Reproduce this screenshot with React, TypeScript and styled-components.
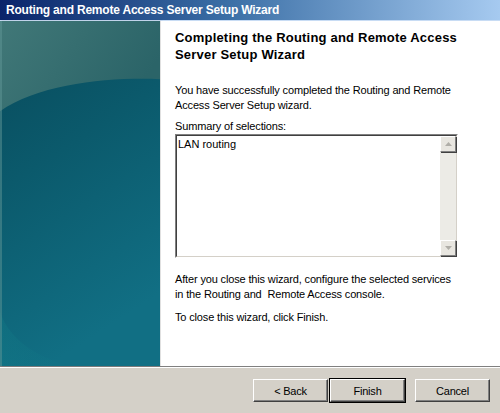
import styled, { createGlobalStyle } from "styled-components";

const GlobalStyle = createGlobalStyle`
  html, body {
    margin: 0;
    padding: 0;
    background: #d4d0c8;
  }
  body {
    font-family: "Liberation Sans", Arial, sans-serif;
  }
`;

const Window = styled.div`
  width: 500px;
  height: 413px;
  display: flex;
  flex-direction: column;
  background: #d4d0c8;
  overflow: hidden;
`;

const TitleBar = styled.div`
  height: 20px;
  flex: none;
  display: flex;
  align-items: center;
  padding-left: 6px;
  background: linear-gradient(to right, #0a246a 0%, #3a6ea5 45%, #a6caf0 100%);
  border-bottom: 1px solid #c8dcf4;
  color: #fff;
  font-family: "Liberation Sans", Arial, sans-serif;
  font-weight: bold;
  font-size: 12px;
  letter-spacing: -0.2px;
`;

const Body = styled.div`
  flex: 1;
  display: flex;
  min-height: 0;
  border-bottom: 1px solid #808080;
  box-shadow: 0 1px 0 #fff;
`;

const Side = styled.div`
  width: 160px;
  flex: none;
  border-right: 1px solid #e0e0e0;
  box-shadow: 1px 0 2px rgba(0, 0, 0, 0.12);
  svg {
    display: block;
    width: 100%;
    height: 100%;
  }
`;

const Content = styled.div`
  flex: 1;
  background: #fff;
  padding: 8px 0 0 14px;
  font-size: 11px;
  line-height: 15px;
  color: #000;
  white-space: nowrap;
`;

const Heading = styled.h1`
  margin: 0 0 20px 0;
  font-size: 13px;
  line-height: 17px;
  font-weight: bold;
  font-family: "Liberation Sans", Arial, sans-serif;
  letter-spacing: 0.2px;
`;

const Para = styled.p<{ $gap?: number }>`
  margin: 0 0 ${(p) => p.$gap ?? 11}px 0;
  letter-spacing: -0.15px;
`;

const ListBox = styled.div`
  width: 283px;
  height: 124px;
  box-sizing: border-box;
  display: flex;
  border-top: 1px solid #808080;
  border-left: 1px solid #808080;
  border-right: 1px solid #fff;
  border-bottom: 1px solid #fff;
  margin-bottom: 14px;
`;

const ListInner = styled.div`
  flex: 1;
  display: flex;
  border-top: 1px solid #404040;
  border-left: 1px solid #404040;
  border-right: 1px solid #d4d0c8;
  border-bottom: 1px solid #d4d0c8;
`;

const ListText = styled.div`
  flex: 1;
  padding: 2px 1px;
  line-height: 13px;
`;

const ScrollBar = styled.div`
  width: 16px;
  display: flex;
  flex-direction: column;
  justify-content: space-between;
  background: #ecebe6;
`;

const ScrollButton = styled.div`
  width: 16px;
  height: 16px;
  box-sizing: border-box;
  display: flex;
  align-items: center;
  justify-content: center;
  background: #e8e6e0;
  border-top: 1px solid #fff;
  border-left: 1px solid #fff;
  border-right: 1px solid #808080;
  border-bottom: 1px solid #808080;
  box-shadow: 1px 1px 0 #404040;
  color: #b0aea8;
`;

const Footer = styled.div`
  height: 46px;
  flex: none;
  display: flex;
  align-items: flex-start;
  justify-content: flex-end;
  padding: 12px 10px 0 0;
  box-sizing: border-box;
`;

const Button = styled.button<{ $default?: boolean; $gap?: number }>`
  width: 75px;
  height: 23px;
  margin-left: ${(p) => p.$gap ?? 0}px;
  background: #d4d0c8;
  font-family: "Liberation Sans", Arial, sans-serif;
  font-size: 11px;
  color: #000;
  padding: 0;
  border-style: solid;
  border-width: 1px;
  border-color: #fff #404040 #404040 #fff;
  box-shadow: inset -1px -1px 0 #808080;
  outline: ${(p) => (p.$default ? "1px solid #000" : "none")};
  outline-offset: 0;
  letter-spacing: -0.2px;
`;

function SideArt() {
  return (
    <svg viewBox="0 0 160 344" preserveAspectRatio="none">
      <defs>
        <linearGradient id="base" x1="0" y1="0" x2="0.3" y2="1">
          <stop offset="0" stopColor="#08495a" />
          <stop offset="0.45" stopColor="#0b5a6c" />
          <stop offset="1" stopColor="#116f84" />
        </linearGradient>
        <linearGradient id="top" x1="0" y1="0" x2="1" y2="0.4">
          <stop offset="0" stopColor="#417878" />
          <stop offset="1" stopColor="#2b6468" />
        </linearGradient>
        <linearGradient id="low" x1="0" y1="0" x2="1" y2="0">
          <stop offset="0" stopColor="#13818a" stopOpacity="0.8" />
          <stop offset="1" stopColor="#13818a" stopOpacity="0" />
        </linearGradient>
      </defs>
      <rect x="0" y="0" width="160" height="344" fill="url(#base)" />
      <path d="M0 0 H160 V58 C110 56 40 62 0 90 Z" fill="url(#top)" />
      <path d="M0 290 C10 320 40 336 70 344 H0 Z" fill="url(#low)" opacity="0.35" />
      <rect x="0" y="0" width="2" height="344" fill="#5f9595" opacity="0.5" />
    </svg>
  );
}

function Arrow({ up }: { up?: boolean }) {
  return (
    <svg width="7" height="4" viewBox="0 0 7 4">
      <path d={up ? "M0 4 L3.5 0 L7 4 Z" : "M0 0 L3.5 4 L7 0 Z"} fill="currentColor" />
    </svg>
  );
}

export default function App() {
  return (
    <Window>
      <GlobalStyle />
      <TitleBar>Routing and Remote Access Server Setup Wizard</TitleBar>
      <Body>
        <Side>
          <SideArt />
        </Side>
        <Content>
          <Heading>
            Completing the Routing and Remote Access
            <br />
            Server Setup Wizard
          </Heading>
          <Para $gap={6}>
            You have successfully completed the Routing and Remote
            <br />
            Access Server Setup wizard.
          </Para>
          <Para $gap={0}>Summary of selections:</Para>
          <ListBox>
            <ListInner>
              <ListText>LAN routing</ListText>
              <ScrollBar>
                <ScrollButton>
                  <Arrow up />
                </ScrollButton>
                <ScrollButton>
                  <Arrow />
                </ScrollButton>
              </ScrollBar>
            </ListInner>
          </ListBox>
          <Para $gap={8}>
            After you close this wizard, configure the selected services
            <br />
            in the Routing and&nbsp; Remote Access console.
          </Para>
          <Para>To close this wizard, click Finish.</Para>
        </Content>
      </Body>
      <Footer>
        <Button>&lt; Back</Button>
        <Button $default $gap={2}>
          Finish
        </Button>
        <Button $gap={10}>Cancel</Button>
      </Footer>
    </Window>
  );
}
